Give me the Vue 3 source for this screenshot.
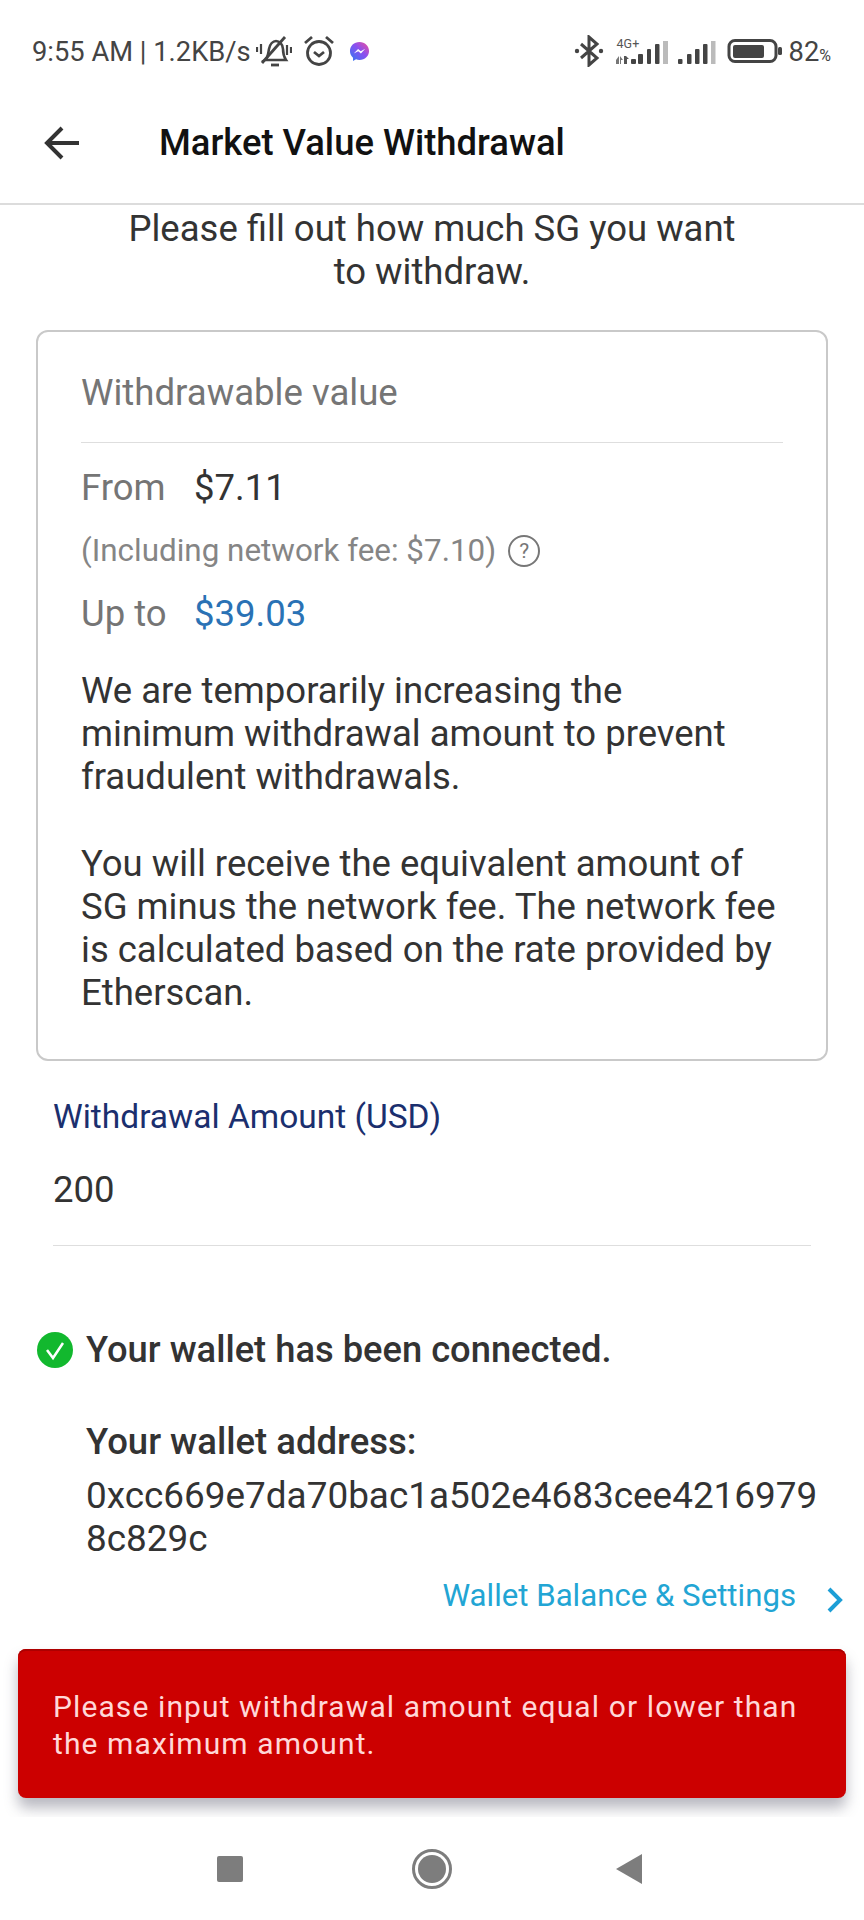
<template>
  <div class="page">
    <div class="status">
      <div class="status-left">
        <span class="status-text">9:55 AM | 1.2KB/s</span>
        <svg class="ic-bell" width="36" height="32" viewBox="0 0 36 32" fill="none" stroke="#444" stroke-width="2.600">
          <path d="M9 24c3-2 3-6 4-11 1-5 4-8 7-8s7 3 7 8c0 5 1 8 3 11z" />
          <path d="M15 29h8" stroke-width="2.800" />
          <path d="M6 27L29 1" stroke-width="2.800" />
          <path d="M1 11v5M5 8v10M31 9v10M35 11v6" stroke-width="2.200" />
        </svg>
        <svg class="ic-alarm" width="32" height="32" viewBox="0 0 32 32" fill="none" stroke="#444" stroke-width="2.800">
          <circle cx="16" cy="18" r="11.500" />
          <path d="M11 17l5 4 5-4" />
          <path d="M2 8l7-6M30 8l-7-6" />
        </svg>
        <svg class="ic-msg" width="21" height="21" viewBox="0 0 22 22">
          <defs>
            <linearGradient id="msg" x1="0" y1="1" x2="1" y2="0">
              <stop offset="0" stop-color="#2f7bf0" />
              <stop offset="0.55" stop-color="#8a4ff0" />
              <stop offset="1" stop-color="#f0509a" />
            </linearGradient>
          </defs>
          <path d="M11 1C5.300 1 1 5.100 1 10.500c0 2.900 1.200 5.300 3.200 7v3.500l3.200-1.800c1.100.4 2.300.6 3.600.6 5.700 0 10-4.100 10-9.300S16.700 1 11 1z" fill="url(#msg)" />
          <path d="M5 13l4.500-4.500 2.800 2.300L17 8l-4.500 5-2.800-2.300z" fill="#fff" />
        </svg>
      </div>
      <div class="status-right">
        <svg class="ic-bt" width="30" height="32" viewBox="0 0 30 32" fill="none" stroke="#444" stroke-width="3">
          <path d="M7 9l16 14-8 7V2l8 7L7 23" />
          <circle cx="3" cy="16" r="2.200" fill="#444" stroke="none" />
          <circle cx="27" cy="16" r="2.200" fill="#444" stroke="none" />
        </svg>
        <div class="signal-one">
          <span class="net-label">4G+</span>
          <svg width="54" height="24" viewBox="0 0 54 24" fill="#444">
            <path d="M0 20l3-4v8H0zM4 16l3 4H5v4H4z" fill="#777" />
            <path d="M8 16h2l3 3h-2v5H8z" fill="#555" />
            <rect x="15" y="19" width="5" height="5" rx="1" />
            <rect x="22" y="14" width="5" height="10" rx="1" />
            <rect x="31" y="9" width="4" height="15" rx="1" />
            <rect x="39" y="4" width="4.500" height="20" rx="1" />
            <rect x="47" y="1" width="5" height="23" fill="#bbb" />
          </svg>
        </div>
        <svg class="signal-two" width="40" height="24" viewBox="0 0 40 24" fill="#444">
          <rect x="0" y="19" width="4.500" height="5" rx="1" />
          <rect x="9" y="14" width="4.500" height="10" rx="1" />
          <rect x="17" y="9" width="4.500" height="15" rx="1" />
          <rect x="25" y="4" width="4.500" height="20" rx="1" />
          <rect x="33" y="1" width="4.500" height="23" fill="#bbb" />
        </svg>
        <svg class="ic-batt" width="56" height="24" viewBox="0 0 56 24">
          <rect x="2" y="1.500" width="47" height="21" rx="6" fill="none" stroke="#444" stroke-width="3" />
          <rect x="6" y="6" width="31" height="13" rx="2" fill="#444" />
          <rect x="51" y="8" width="4" height="8" rx="1.500" fill="#444" />
        </svg>
        <span class="status-text batt-text">82<small>%</small></span>
      </div>
    </div>

    <header class="topbar">
      <svg class="back" width="35" height="34" viewBox="0 0 35 34" fill="none" stroke="#333" stroke-width="4">
        <path d="M35 17H3M18 2L3 17l15 15" />
      </svg>
      <h1>Market Value Withdrawal</h1>
    </header>

    <main class="content">
      <p class="intro">Please fill out how much SG you want<br />to withdraw.</p>

      <section class="card">
        <div class="card-title">Withdrawable value</div>
        <div class="range-row range-from">
          <span class="range-label">From</span>
          <span class="range-min">$7.11</span>
        </div>
        <div class="fee-row">
          <span>(Including network fee: $7.10)</span>
          <span class="help">?</span>
        </div>
        <div class="range-row range-up">
          <span class="range-label">Up to</span>
          <span class="range-max">$39.03</span>
        </div>
        <p class="note">We are temporarily increasing the<br />minimum withdrawal amount to prevent<br />fraudulent withdrawals.</p>
        <p class="note">You will receive the equivalent amount of<br />SG minus the network fee. The network fee<br />is calculated based on the rate provided by<br />Etherscan.</p>
      </section>

      <div class="field">
        <label>Withdrawal Amount (USD)</label>
        <div class="field-value">200</div>
      </div>

      <section class="wallet">
        <div class="wallet-ok">
          <svg width="36" height="36" viewBox="0 0 36 36">
            <circle cx="18" cy="18" r="18" fill="#12b82e" />
            <path d="M10 18l6 8 10-15" fill="none" stroke="#fff" stroke-width="2.500" />
          </svg>
          <span>Your wallet has been connected.</span>
        </div>
        <div class="wallet-label">Your wallet address:</div>
        <div class="wallet-addr">0xcc669e7da70bac1a502e4683cee4216979<br />8c829c</div>
        <a class="wallet-link">
          <span>Wallet Balance &amp; Settings</span>
          <svg width="18" height="26" viewBox="0 0 18 26" fill="none" stroke="#1c9ed6" stroke-width="4">
            <path d="M3 2l11 11L3 24" />
          </svg>
        </a>
      </section>
    </main>

    <div class="toast">Please input withdrawal amount equal or lower than the maximum amount.</div>

    <nav class="navbar">
      <span class="nav-square"></span>
      <span class="nav-circle"><span></span></span>
      <svg class="nav-back" width="26" height="30" viewBox="0 0 26 30"><path d="M26 0v30L0 15z" fill="#7d7d7d" /></svg>
    </nav>
  </div>
</template>

<script setup>
</script>

<style>
html, body { background: #fff; }
</style>

<style scoped>
.page {
  position: relative;
  width: 864px;
  height: 1920px;
  overflow: hidden;
  background: #fff;
  display: flex;
  flex-direction: column;
  font-family: Roboto, "Liberation Sans", sans-serif;
  color: #333;
}

.status {
  height: 104px;
  padding: 32px 33px 0 32px;
  box-sizing: border-box;
  display: flex;
  justify-content: space-between;
  align-items: flex-start;
  flex: none;
}
.status-left, .status-right {
  display: flex;
  align-items: center;
  height: 40px;
}
.status-text {
  font-size: 27.3px;
  color: #444;
}
.ic-bell { margin-left: 5px; }
.ic-alarm { margin-left: 11px; margin-top: -2px; }
.ic-msg { margin-left: 14px; margin-top: -2px; }
.status-right { margin-top: -4px; }
.ic-bt { margin-top: 6px; margin-right: 12px; }
.signal-one { position: relative; width: 54px; height: 24px; margin-top: 7px; }
.net-label {
  position: absolute;
  left: 1px;
  top: -4px;
  font-size: 12.5px;
  color: #555;
}
.signal-two { margin-left: 8px; margin-top: 7px; }
.ic-batt { margin-left: 9px; margin-top: 6px; }
.batt-text { margin-left: 6px; margin-top: 8px; }
.batt-text small { font-size: 16px; }

.topbar {
  flex: none;
  height: 101px;
  padding: 0 0 0 44px;
  box-sizing: border-box;
  display: flex;
  align-items: center;
  border-bottom: 2px solid #dcdcdc;
}
.topbar h1 {
  margin: 0 0 22px 0;
  font-size: 36.4px;
  font-weight: 500;
  color: #111;
}
.back { margin: 0 80px 22px 0; }

.content {
  flex: 1;
  min-height: 0;
  display: flex;
  flex-direction: column;
}
.intro {
  margin: 0;
  padding-top: 2px;
  text-align: center;
  font-size: 36.5px;
  line-height: 43px;
  color: #333;
}

.card {
  margin: 37px 36px 0;
  height: 731px;
  box-sizing: border-box;
  padding: 0 43px;
  border: 2px solid #c9c9c9;
  border-radius: 12px;
  display: flex;
  flex-direction: column;
}
.card-title {
  height: 111px;
  padding-top: 40px;
  box-sizing: border-box;
  font-size: 36.6px;
  line-height: 42px;
  color: #757575;
  border-bottom: 1px solid #dedede;
}
.range-row {
  display: flex;
  font-size: 36.5px;
  line-height: 42px;
}
.range-from { margin-top: 24px; }
.range-up { margin-top: 22px; }
.range-label { width: 113px; color: #757575; }
.range-min { color: #333; }
.range-max { color: #2a72b5; }
.fee-row {
  margin-top: 22px;
  display: flex;
  align-items: center;
  font-size: 31.4px;
  line-height: 40px;
  color: #858585;
}
.help {
  margin-left: 12px;
  width: 32px;
  height: 32px;
  box-sizing: border-box;
  border: 2.500px solid #777;
  border-radius: 50%;
  display: flex;
  align-items: center;
  justify-content: center;
  font-size: 21px;
  line-height: 1;
  color: #777;
}
.note {
  margin: 34px 0 0;
  font-size: 36.5px;
  line-height: 43px;
  color: #333;
}
.note + .note { margin-top: 44px; }

.field {
  margin: 0 53px;
  height: 185px;
  box-sizing: border-box;
  padding-top: 36px;
  border-bottom: 1px solid #dedede;
}
.field label {
  display: block;
  font-size: 33.500px;
  line-height: 40px;
  color: #1b2f6e;
}
.field-value {
  margin-top: 32px;
  font-size: 36.5px;
  line-height: 42px;
  color: #333;
}

.wallet { padding: 82px 0 0; }
.wallet-ok {
  margin-left: 37px;
  display: flex;
  align-items: center;
  gap: 13px;
  font-size: 36.3px;
  line-height: 44px;
  font-weight: 500;
}
.wallet-label {
  margin: 48px 0 0 86px;
  font-size: 36.5px;
  line-height: 44px;
  font-weight: 500;
}
.wallet-addr {
  margin: 10px 0 0 86px;
  font-size: 36.9px;
  line-height: 43px;
}
.wallet-link {
  margin: 16px 20px 0 0;
  display: flex;
  justify-content: flex-end;
  align-items: center;
  gap: 30px;
  font-size: 31.2px;
  line-height: 40px;
  color: #22a5d4;
}
.wallet-link svg { margin-top: 8px; }

.toast {
  position: absolute;
  left: 18px;
  top: 1649px;
  width: 828px;
  height: 149px;
  box-sizing: border-box;
  padding: 39px 35px 0;
  border-radius: 8px;
  background: #cc0000;
  color: #ffd8d8;
  font-size: 30px;
  line-height: 37px;
  letter-spacing: 1.1px;
  box-shadow: inset 0 2px 0 #ad0000, 0 10px 14px rgba(80, 80, 100, 0.4);
}

.navbar {
  position: absolute;
  left: 0;
  right: 0;
  top: 1817px;
  height: 103px;
  padding-right: 5px;
  box-sizing: border-box;
  background: #fff;
  display: flex;
  justify-content: center;
  align-items: center;
}
.nav-square {
  width: 26px;
  height: 26px;
  border-radius: 2px;
  background: #7d7d7d;
}
.nav-circle {
  margin-left: 169px;
  width: 40px;
  height: 40px;
  box-sizing: border-box;
  border: 3px solid #7d7d7d;
  border-radius: 50%;
  padding: 3px;
}
.nav-circle span {
  display: block;
  width: 100%;
  height: 100%;
  border-radius: 50%;
  background: #7d7d7d;
}
.nav-back { margin-left: 164px; }
</style>
